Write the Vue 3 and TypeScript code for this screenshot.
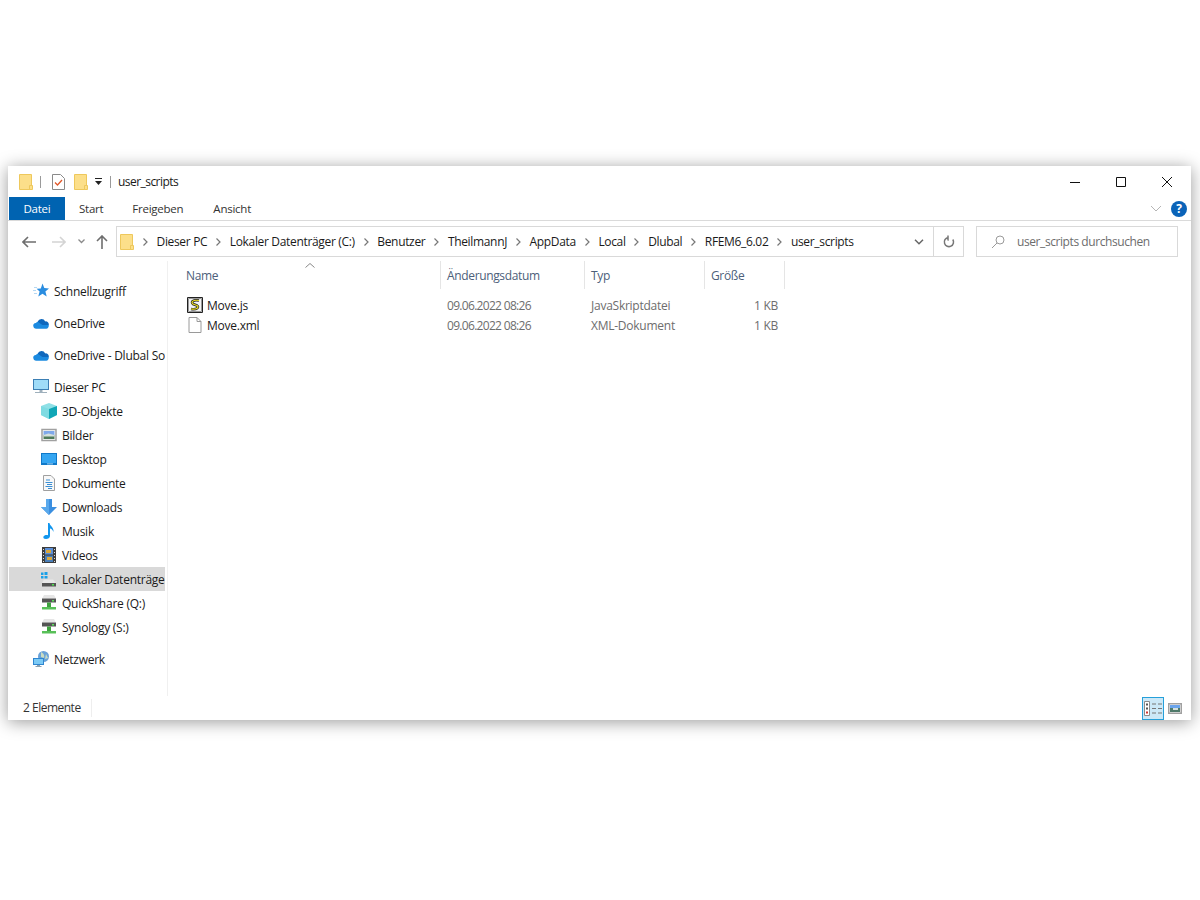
<script setup lang="ts">
interface NavItem {
  label: string;
  icon: string;
  sub?: boolean;
  group?: boolean;
  active?: boolean;
}

const crumbs = ['Dieser PC', 'Lokaler Datenträger (C:)', 'Benutzer', 'TheilmannJ', 'AppData', 'Local', 'Dlubal', 'RFEM6_6.02', 'user_scripts'];

const nav: NavItem[] = [
  { label: 'Schnellzugriff', icon: 'star' },
  { label: 'OneDrive', icon: 'cloud', group: true },
  { label: 'OneDrive - Dlubal Software GmbH', icon: 'cloud', group: true },
  { label: 'Dieser PC', icon: 'pc', group: true },
  { label: '3D-Objekte', icon: 'cube', sub: true },
  { label: 'Bilder', icon: 'picture', sub: true },
  { label: 'Desktop', icon: 'desktop', sub: true },
  { label: 'Dokumente', icon: 'doc', sub: true },
  { label: 'Downloads', icon: 'download', sub: true },
  { label: 'Musik', icon: 'music', sub: true },
  { label: 'Videos', icon: 'film', sub: true },
  { label: 'Lokaler Datenträger (C:)', icon: 'windrive', sub: true, active: true },
  { label: 'QuickShare (Q:)', icon: 'netdrive', sub: true },
  { label: 'Synology (S:)', icon: 'netdrive', sub: true },
  { label: 'Netzwerk', icon: 'network', group: true },
];

const files = [
  { name: 'Move.js', date: '09.06.2022 08:26', type: 'JavaSkriptdatei', size: '1 KB', icon: 'script' },
  { name: 'Move.xml', date: '09.06.2022 08:26', type: 'XML-Dokument', size: '1 KB', icon: 'blank' },
];
</script>

<template>
  <div class="page">
    <svg class="defs" width="0" height="0">
      <symbol id="folder" viewBox="0 0 14 16">
        <path d="M.5 .5h12v15H.5z" fill="#fcdf8a" stroke="#eec85c" />
        <path d="M10.500 11.500h3v4h-3z" fill="#fcdf8a" stroke="#eec85c" />
      </symbol>
      <symbol id="star" viewBox="0 0 16 16">
        <path d="M9.500 .5l1.800 4.600 4.700.3-3.600 3 1.300 5-4.200-2.700-4.200 2.700 1.300-5-3-2.700 4.200-.3z" fill="#2a8de0" />
        <path d="M1 4.500h3M0 7.500h3M1 10.500h3" stroke="#b5d8f3" />
      </symbol>
      <symbol id="cloud" viewBox="0 0 17 12">
        <path d="M5 4.500A4.400 4.400 0 0 1 13 4.300A3.300 3.300 0 0 1 16.800 8H6z" fill="#0f68bd" />
        <path d="M3.500 12A3 3 0 0 1 3 6 4 4 0 0 1 5 4.800L10 8l6.800 0c.2 1.800-.8 4-2.800 4z" fill="#1b8ae0" />
      </symbol>
      <symbol id="pc" viewBox="0 0 16 16">
        <path d="M0 0h16v11H0z" fill="#3c7fb4" />
        <path d="M1 1h14v9H1z" fill="#9fdcf8" />
        <path d="M6.500 11h3v2h-3zM2 13h12v1H2z" fill="#9fb0bc" />
      </symbol>
      <symbol id="cube" viewBox="0 0 16 16">
        <path d="M8 0l8 3v9l-8 4-8-4V3z" fill="#8fe0e6" />
        <path d="M8 6l8-3v9l-8 4z" fill="#10a6b6" />
        <path d="M0 3l8 3v10l-8-4z" fill="#7edbe2" />
      </symbol>
      <symbol id="picture" viewBox="0 0 16 13">
        <path d="M1 1h14v11H1z" fill="#fff" stroke="#a0a0a0" stroke-width="1.500" />
        <path d="M2.500 2.500h11v4h-11z" fill="#7fa8ea" />
        <path d="M2.500 6.500h11v4h-11z" fill="#4e7a5a" />
        <path d="M2.500 6.500l5-1.500 6 1.500v1.500h-11z" fill="#d5e0dc" />
      </symbol>
      <symbol id="desktop" viewBox="0 0 16 12">
        <path d="M0 0h16v12H0z" fill="#1079c9" />
        <path d="M1 1h14v9H1z" fill="#35a6f2" />
        <path d="M6 10.500h6v.8H6z" fill="#bfe4fb" />
      </symbol>
      <symbol id="doc" viewBox="0 0 12 16">
        <path d="M.5 .5h7.500l3.500 3.500v11.500H.5z" fill="#f8f8f8" stroke="#a0a0a0" />
        <path d="M3 5h4M2.500 7.500h7M4 9.500h5M2.500 11.500h7M5 13.500h4" stroke="#3b8fd4" />
      </symbol>
      <symbol id="download" viewBox="0 0 16 16">
        <path d="M5 0h6v8h5l-8 8-8-8h5z" fill="#3b8fe0" />
        <path d="M5 0h3v16l-8-8h5z" fill="#5aa9ec" />
      </symbol>
      <symbol id="music" viewBox="0 0 12 16">
        <path d="M5 0h1.500c.3 3 4.500 4 4 9-.5-2-2.300-3.300-3.500-3.500V13c0 2-2 3-4 3-2.500 0-3-1.500-2.500-2.500C1 12 3.500 11.500 5 12.200z" fill="#1296ee" />
      </symbol>
      <symbol id="film" viewBox="0 0 14 16">
        <path d="M0 0h14v16H0z" fill="#3d3d3d" />
        <path d="M3 1h8v6.500H3z" fill="#5b8fd8" />
        <path d="M3 8.500h8V15H3z" fill="#4a7fb8" />
        <path d="M4 3h5v3H4zM5 10h5v3H5z" fill="#d9a63a" />
        <path d="M1 2h1v1H1zM1 5h1v1H1zM1 8h1v1H1zM1 11h1v1H1zM1 14h1v1H1zM12 2h1v1h-1zM12 5h1v1h-1zM12 8h1v1h-1zM12 11h1v1h-1zM12 14h1v1h-1z" fill="#ddd" />
      </symbol>
      <symbol id="windrive" viewBox="0 0 16 16">
        <path d="M0 1.500h2.500V4H0zM3.500 1H6.500v3H3.500zM0 5h2.500v2.500H0zM3.500 5h3v2.500h-3z" fill="#18a0e8" />
        <path d="M3 8.500h9l3 3.500H1z" fill="#e8e8e8" />
        <path d="M1 12h14v3.500H1z" fill="#555" />
        <path d="M11 13h2v1.500h-2z" fill="#4fe04f" />
      </symbol>
      <symbol id="netdrive" viewBox="0 0 16 16">
        <path d="M3 0h10l2 3.500H1z" fill="#e6e6e6" />
        <path d="M1 3.500h14V7.500H1z" fill="#555" />
        <path d="M11 5h2v1.500h-2z" fill="#5be05b" />
        <path d="M6 7.500h4v4.500H6z" fill="#3ea23e" />
        <path d="M1 12h14v2.500H1z" fill="#58c058" />
      </symbol>
      <symbol id="network" viewBox="0 0 16 16">
        <circle cx="10.500" cy="5.500" r="5.500" fill="#6aa2d8" />
        <path d="M8 1c2 1 4 3 3 6l-3-1zM13 3l2 4-3 1z" fill="#c9dcc2" />
        <path d="M0 7h11v7H0z" fill="#2f86d0" />
        <path d="M1 8h9v5H1z" fill="#7ccaf5" />
        <path d="M4 14h3v1H4zM2.500 15h6v1h-6z" fill="#8aa0b0" />
      </symbol>
      <symbol id="script" viewBox="0 0 16 16">
        <path d="M.5 .5h15v15H.5z" fill="#fff" stroke="#222" />
        <path d="M1.500 1.500h13v13h-13z" fill="#f4f4f4" stroke="#999" />
        <path d="M12 3.500C6 2.500 3.500 5 6 7l4 1.500c2.500 1.500 0 4.500-6 3.500" fill="none" stroke="#222" stroke-width="2.600" />
        <path d="M12 3.500C6 2.500 3.500 5 6 7l4 1.500c2.500 1.500 0 4.500-6 3.500" fill="none" stroke="#f0e020" stroke-width="1.200" />
      </symbol>
      <symbol id="blank" viewBox="0 0 13 16">
        <path d="M.5 .5h8l4 4v11H.5z" fill="#fff" stroke="#9a9a9a" />
        <path d="M8.500 .5v4h4" fill="none" stroke="#9a9a9a" />
      </symbol>
    </svg>

    <div class="window">
      <div class="titlebar">
        <svg class="ic folder-ic"><use href="#folder" /></svg>
        <span class="qsep sep-a"></span>
        <svg class="check" width="13" height="16" viewBox="0 0 13 16">
          <path d="M.5 .5h8l4 4v11H.5z" fill="#fff" stroke="#8a8a8a" />
          <path d="M3 8.500l2.500 2.500 4.500-5" fill="none" stroke="#e0582a" stroke-width="1.300" />
        </svg>
        <svg class="ic folder-ic second"><use href="#folder" /></svg>
        <svg class="qdrop" width="9" height="9" viewBox="0 0 9 9">
          <path d="M1 1.500h7" stroke="#222" />
          <path d="M1 4h7L4.500 8z" fill="#222" />
        </svg>
        <span class="qsep sep-b"></span>
        <span class="title">user_scripts</span>
        <div class="winctl">
          <svg width="10" height="10" viewBox="0 0 10 10"><path d="M0 5.500h10" stroke="#111" /></svg>
          <svg width="10" height="10" viewBox="0 0 10 10"><path d="M.5 .5h9v9h-9z" fill="none" stroke="#111" /></svg>
          <svg width="10" height="10" viewBox="0 0 10 10"><path d="M0 0l10 10M10 0L0 10" stroke="#111" /></svg>
        </div>
      </div>

      <div class="tabs">
        <span class="tab file">Datei</span>
        <span class="tab start">Start</span>
        <span class="tab share">Freigeben</span>
        <span class="tab view">Ansicht</span>
        <svg class="collapse" width="12" height="7" viewBox="0 0 12 7"><path d="M1 1l5 5 5-5" fill="none" stroke="#b5b5b5" /></svg>
        <span class="help">?</span>
      </div>

      <div class="addressrow">
        <div class="navbtns">
          <svg width="14" height="12" viewBox="0 0 14 12"><path d="M6 1L1 6l5 5M1 6h13" fill="none" stroke="#6e6e6e" stroke-width="1.600" /></svg>
          <svg class="fwd" width="14" height="12" viewBox="0 0 14 12"><path d="M8 1l5 5-5 5M13 6H0" fill="none" stroke="#d4d4d4" stroke-width="1.600" /></svg>
          <svg class="recent" width="7" height="5" viewBox="0 0 7 5"><path d="M.5 .5l3 3 3-3" fill="none" stroke="#8a8a8a" stroke-width="1.300" /></svg>
          <svg class="up" width="12" height="14" viewBox="0 0 12 14"><path d="M1 6l5-5 5 5M6 1v13" fill="none" stroke="#6e6e6e" stroke-width="1.600" /></svg>
        </div>
        <div class="address">
          <svg class="ic folder-ic"><use href="#folder" /></svg>
          <template v-for="c in crumbs" :key="c">
            <svg class="chev" width="5" height="8" viewBox="0 0 5 8"><path d="M.5 .5L4 4 .5 7.500" fill="none" stroke="#777" stroke-width="1.200" /></svg>
            <span class="crumb">{{ c }}</span>
          </template>
          <svg class="addrdrop" width="10" height="6" viewBox="0 0 10 6"><path d="M1 .8l4 4 4-4" fill="none" stroke="#666" stroke-width="1.500" /></svg>
          <div class="refresh">
            <svg width="12" height="13" viewBox="0 0 12 13"><path d="M5 2.500A4.600 4.600 0 1 0 9.800 4.500M5 .5v4.500h-.5" fill="none" stroke="#777" stroke-width="1.500" /></svg>
          </div>
        </div>
        <div class="search">
          <svg width="14" height="14" viewBox="0 0 14 14"><circle cx="9" cy="5" r="4" fill="none" stroke="#9a9a9a" /><path d="M6 8l-5 5" stroke="#9a9a9a" /></svg>
          <span>user_scripts durchsuchen</span>
        </div>
      </div>

      <div class="body">
        <nav class="sidebar">
          <div
            v-for="n in nav"
            :key="n.label"
            class="navitem"
            :class="{ sub: n.sub, group: n.group, active: n.active }"
          >
            <svg class="navicon"><use :href="`#${n.icon}`" /></svg>
            <span class="navlabel">{{ n.label }}</span>
          </div>
        </nav>

        <main class="list">
          <svg class="sort" width="10" height="5" viewBox="0 0 10 5"><path d="M.5 4.500L5 .5l4.500 4" fill="none" stroke="#888" /></svg>
          <div class="row head">
            <span class="c-name">Name</span>
            <span class="c-date">Änderungsdatum</span>
            <span class="c-type">Typ</span>
            <span class="c-size">Größe</span>
          </div>
          <div v-for="f in files" :key="f.name" class="row file-row">
            <span class="c-name">
              <svg class="fileicon"><use :href="`#${f.icon}`" /></svg>
              <span class="fname">{{ f.name }}</span>
            </span>
            <span class="c-date date-val">{{ f.date }}</span>
            <span class="c-type">{{ f.type }}</span>
            <span class="c-size right">{{ f.size }}</span>
          </div>
        </main>
      </div>

      <div class="status">
        <span class="count">2 Elemente</span>
        <div class="views">
          <span class="viewbtn on">
            <svg width="18" height="15" viewBox="0 0 18 15">
              <path d="M.5 .5h5v14h-5z" fill="#fff" stroke="#8a8a8a" />
              <path d="M2 2.500h2v2H2zM2 6.500h2v2H2z" fill="#555" />
              <path d="M2 10.500h2v2H2z" fill="#c33" />
              <path d="M8 3h4M14 3h4M8 7.500h4M14 7.500h4M8 12h4M14 12h4" stroke="#777" stroke-width="1.200" />
            </svg>
          </span>
          <span class="viewbtn">
            <svg width="14" height="11" viewBox="0 0 14 11">
              <path d="M.75 .75h12.500v9.500H.75z" fill="#fff" stroke="#a0a0a0" stroke-width="1.500" />
              <path d="M2 2h10v3H2z" fill="#6aa4ec" />
              <path d="M2 5h10v4H2z" fill="#4f7a6a" />
              <path d="M5 5h5v2H5z" fill="#d5e0dc" />
            </svg>
          </span>
        </div>
      </div>
    </div>
  </div>
</template>

<style>
html, body {
  background: #fff;
}
</style>

<style scoped>
.page {
  height: 900px;
  padding: 166px 9px 0 8px;
  box-sizing: border-box;
  font-family: "Open Sans", "Liberation Sans", sans-serif;
  font-size: 12px;
  letter-spacing: -0.25px;
  color: #1a1a1a;
  overflow: hidden;
}
.defs {
  position: absolute;
}
.window {
  height: 554px;
  background: #fff;
  box-shadow: 0 2px 16px rgba(0, 0, 0, 0.4);
  display: flex;
  flex-direction: column;
}
.titlebar {
  height: 31px;
  display: flex;
  align-items: center;
  padding-left: 11px;
  flex: none;
}
.folder-ic {
  width: 14px;
  height: 16px;
  flex: none;
}
.qsep {
  width: 1px;
  height: 12px;
  background: #9a9a9a;
}
.sep-a {
  margin-left: 7px;
}
.check {
  margin-left: 11px;
}
.second {
  margin-left: 9px;
}
.qdrop {
  margin-left: 6px;
}
.sep-b {
  margin-left: 7px;
}
.title {
  margin-left: 7px;
  letter-spacing: -0.55px;
}
.winctl {
  margin-left: auto;
  display: flex;
  gap: 36px;
  padding-right: 19px;
  align-items: center;
}
.tabs {
  height: 24px;
  flex: none;
  display: flex;
  align-items: center;
  border-bottom: 1px solid #dadada;
  box-sizing: border-box;
  padding-left: 1px;
  padding-right: 4px;
  font-size: 11.5px;
  color: #333;
}
.tab {
  flex: none;
}
.file {
  width: 56px;
  height: 23px;
  background: #0063b1;
  color: #fff;
  display: flex;
  align-items: center;
  justify-content: center;
}
.start {
  margin-left: 14px;
}
.share {
  margin-left: 29px;
}
.view {
  margin-left: 30px;
}
.collapse {
  margin-left: auto;
}
.help {
  width: 16px;
  height: 16px;
  margin-left: 9px;
  border-radius: 50%;
  background: #0a63b8;
  color: #fff;
  font-weight: 700;
  font-size: 12px;
  display: flex;
  align-items: center;
  justify-content: center;
}
.addressrow {
  height: 40px;
  flex: none;
  display: flex;
  align-items: center;
  padding-top: 1px;
  box-sizing: border-box;
}
.navbtns {
  width: 108px;
  flex: none;
  display: flex;
  align-items: center;
  padding-left: 14px;
  box-sizing: border-box;
}
.fwd {
  margin-left: 16px;
}
.recent {
  margin-left: 12px;
}
.up {
  margin-left: 11px;
}
.address {
  width: 848px;
  height: 31px;
  flex: none;
  box-sizing: border-box;
  border: 1px solid #d9d9d9;
  display: flex;
  align-items: center;
  padding-left: 3px;
}
.chev {
  margin: 0 8.75px;
  flex: none;
}
.chev:first-of-type {
  margin: 0 8px 0 7px;
}
.crumb {
  white-space: nowrap;
  letter-spacing: -0.33px;
}
.addrdrop {
  margin-left: auto;
  margin-right: 9px;
}
.refresh {
  width: 29px;
  height: 100%;
  flex: none;
  border-left: 1px solid #d9d9d9;
  display: flex;
  align-items: center;
  justify-content: center;
}
.search {
  width: 202px;
  height: 31px;
  margin-left: 12px;
  flex: none;
  box-sizing: border-box;
  border: 1px solid #d9d9d9;
  display: flex;
  align-items: center;
  padding-left: 14px;
  gap: 12px;
  color: #6d6d6d;
  letter-spacing: -0.42px;
}
.body {
  flex: 1;
  display: flex;
  min-height: 0;
}
.sidebar {
  width: 158px;
  flex: none;
  padding: 18px 0 0 1px;
  box-sizing: content-box;
  border-right: 1px solid #f0f0f0;
}
.navitem {
  height: 24px;
  width: 156px;
  display: flex;
  align-items: center;
  padding-left: 24px;
  gap: 5px;
  box-sizing: border-box;
  overflow: hidden;
}
.navitem.group {
  margin-top: 8px;
}
.navitem.sub {
  padding-left: 32px;
}
.navitem.active {
  background: #d9d9d9;
}
.navicon {
  width: 16px;
  height: 16px;
  flex: none;
}
.navlabel {
  white-space: nowrap;
}
.list {
  flex: 1;
  position: relative;
  min-width: 0;
}
.sort {
  position: absolute;
  left: 137px;
  top: 2px;
}
.row {
  display: grid;
  grid-template-columns: 273px 144px 120px 80px;
  align-items: center;
}
.head {
  height: 28px;
  color: #4c607a;
  margin-bottom: 6px;
  letter-spacing: -0.35px;
}
.head > span {
  height: 100%;
  display: flex;
  align-items: center;
  border-right: 1px solid #e5e5e5;
  padding-left: 6px;
  box-sizing: border-box;
}
.head .c-name {
  padding-left: 18px;
}
.file-row {
  height: 20px;
  color: #6d6d6d;
}
.file-row > span {
  padding-left: 6px;
}
.file-row .c-name {
  display: flex;
  align-items: center;
  padding-left: 19px;
  gap: 4px;
  color: #1a1a1a;
}
.date-val {
  letter-spacing: -0.69px;
}
.fileicon {
  width: 16px;
  height: 16px;
  flex: none;
}
.right {
  text-align: right;
  padding-right: 7px;
}
.status {
  height: 24px;
  flex: none;
  display: flex;
  align-items: center;
  padding-left: 15px;
  color: #333;
}
.count {
  padding-right: 10px;
  padding-bottom: 1px;
  border-right: 1px solid #eee;
  letter-spacing: -0.5px;
}
.views {
  margin-left: auto;
  display: flex;
  align-items: center;
  height: 100%;
  padding-right: 5px;
}
.viewbtn {
  width: 22px;
  height: 23px;
  display: flex;
  align-items: center;
  justify-content: center;
  box-sizing: border-box;
}
.viewbtn.on {
  background: #cce8f7;
  border: 1px solid #26a0da;
}
</style>
